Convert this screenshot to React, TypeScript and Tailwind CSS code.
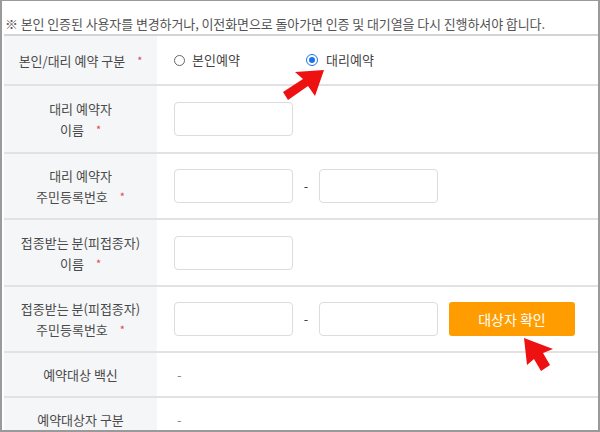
import React from 'react'

const font = { fontFamily: '"Noto Sans CJK KR", "Noto Sans", sans-serif' }

function Star() {
    return <span className='text-[#e0474c] text-[11px] ml-3 align-top'>*</span>
}

function Field() {
    return <div className='w-[119px] h-[34px] border border-[#dcdcdc] rounded-[4px] bg-white' />
}

function Row({ label, h, children }: { label: React.ReactNode; h: string; children?: React.ReactNode }) {
    return (
        <div className={`flex border-b-2 border-[#e2e2e2] ${h}`}>
            <div className='w-[153px] shrink-0 bg-[#f5f6f8] flex items-center justify-center text-center text-[13px] leading-[21px] text-[#4a4a4a]'>
                <div>{label}</div>
            </div>
            <div className='flex-1 flex items-center pl-[17px] text-[13px] text-[#444]'>{children}</div>
        </div>
    )
}

export default function App() {
    return (
        <div className='w-[600px] h-[432px] overflow-hidden bg-white relative border-t border-x-2 border-b-2 border-[#9a9a9a]' style={font}>
            <div className='h-[33px] pt-[13px] pl-[3px] text-[13px] leading-[20px] text-[#555] tracking-[-0.1px]'>
                ※ 본인 인증된 사용자를 변경하거나, 이전화면으로 돌아가면 인증 및 대기열을 다시 진행하셔야 합니다.
            </div>
            <div className='ml-[2px] border-t-2 border-[#d4d4d4]'>
                <Row label={<>본인/대리 예약 구분<Star /></>} h='h-[50px]'>
                    <label className='flex items-center gap-[7px] w-[132px]'>
                        <span className='w-[11px] h-[11px] rounded-full border border-[#666] bg-white' />
                        <span>본인예약</span>
                    </label>
                    <label className='flex items-center gap-[8px]'>
                        <span className='w-[12px] h-[12px] rounded-full border border-[#1a73e8] bg-white flex items-center justify-center'>
                            <span className='w-[6px] h-[6px] rounded-full bg-[#1a73e8]' />
                        </span>
                        <span>대리예약</span>
                    </label>
                </Row>
                <Row label={<>대리 예약자<br />이름<Star /></>} h='h-[68px]'>
                    <Field />
                </Row>
                <Row label={<>대리 예약자<br />주민등록번호<Star /></>} h='h-[66px]'>
                    <Field />
                    <span className='w-[26px] text-center'>-</span>
                    <Field />
                </Row>
                <Row label={<>접종받는 분(피접종자)<br />이름<Star /></>} h='h-[67px]'>
                    <Field />
                </Row>
                <Row label={<>접종받는 분(피접종자)<br />주민등록번호<Star /></>} h='h-[66px]'>
                    <Field />
                    <span className='w-[26px] text-center'>-</span>
                    <Field />
                    <button className='ml-[11px] w-[126px] h-[34px] rounded-[3px] bg-[#ff9d00] text-white text-[14px]'>대상자 확인</button>
                </Row>
                <Row label='예약대상 백신' h='h-[45px]'>
                    <span className='text-[#888] pl-[3px]'>-</span>
                </Row>
                <Row label='예약대상자 구분' h='h-[45px]'>
                    <span className='text-[#888] pl-[3px]'>-</span>
                </Row>
            </div>
            <svg className='absolute left-0 top-0 pointer-events-none' width='600' height='432'>
                <polygon points='322,69 293,71 301,78 281,91 286,99 306,85 313,95' fill='#ee1111' />
                <polygon points='522,337 551,348 541,352 548,364 539,370 532,358 525,364' fill='#ee1111' />
            </svg>
        </div>
    )
}
